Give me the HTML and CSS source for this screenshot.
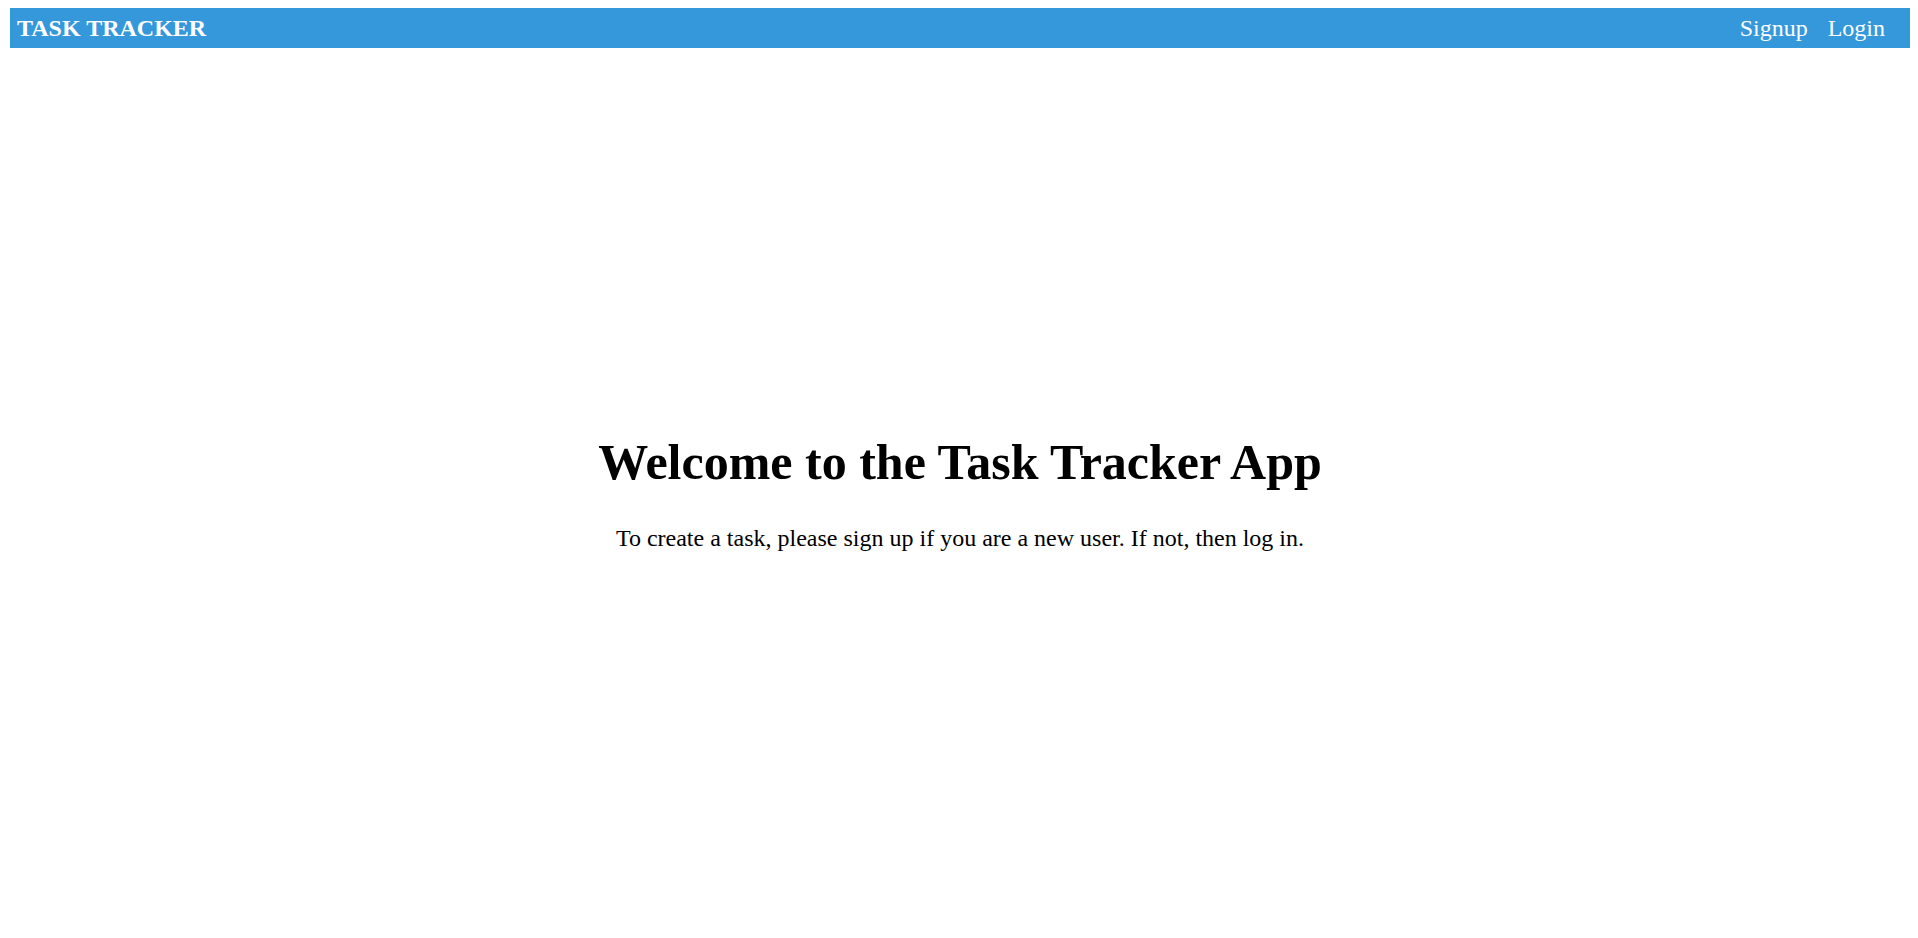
FILE: index.html
```html
<!DOCTYPE html>
<html>
<head>
<meta charset="utf-8">
<title>Task Tracker</title>
<link rel="stylesheet" href="styles.css">
</head>
<body>
<nav class="navbar">
  <a class="brand" href="#">TASK TRACKER</a>
  <div class="nav-links">
    <a class="nav-link" href="#">Signup</a>
    <a class="nav-link" href="#">Login</a>
  </div>
</nav>
<main class="hero">
  <h1 class="hero-title">Welcome to the Task Tracker App</h1>
  <p class="hero-text">To create a task, please sign up if you are a new user. If not, then log in.</p>
</main>
</body>
</html>
```
FILE: styles.css
```css
html, body {
  margin: 0;
  padding: 0;
}
body {
  padding: 8px 8px 0 10px;
  font-family: "Liberation Serif", "Times New Roman", serif;
  color: #000;
  background: #fff;
}
.navbar {
  display: flex;
  align-items: center;
  justify-content: space-between;
  height: 40px;
  width: 1900px;
  box-sizing: border-box;
  padding: 0 25px 0 7px;
  background: #3498db;
}
.brand {
  color: #fff;
  font-weight: bold;
  font-size: 24px;
  text-decoration: none;
}
.nav-links {
  display: flex;
  gap: 20px;
}
.nav-link {
  color: #fff;
  font-size: 24px;
  text-decoration: none;
}
.hero {
  display: flex;
  flex-direction: column;
  align-items: center;
  padding-top: 385px;
  width: 1900px;
}
.hero-title {
  margin: 0;
  font-size: 50px;
  font-weight: bold;
}
.hero-text {
  margin: 34px 0 0;
  font-size: 24px;
}
```
